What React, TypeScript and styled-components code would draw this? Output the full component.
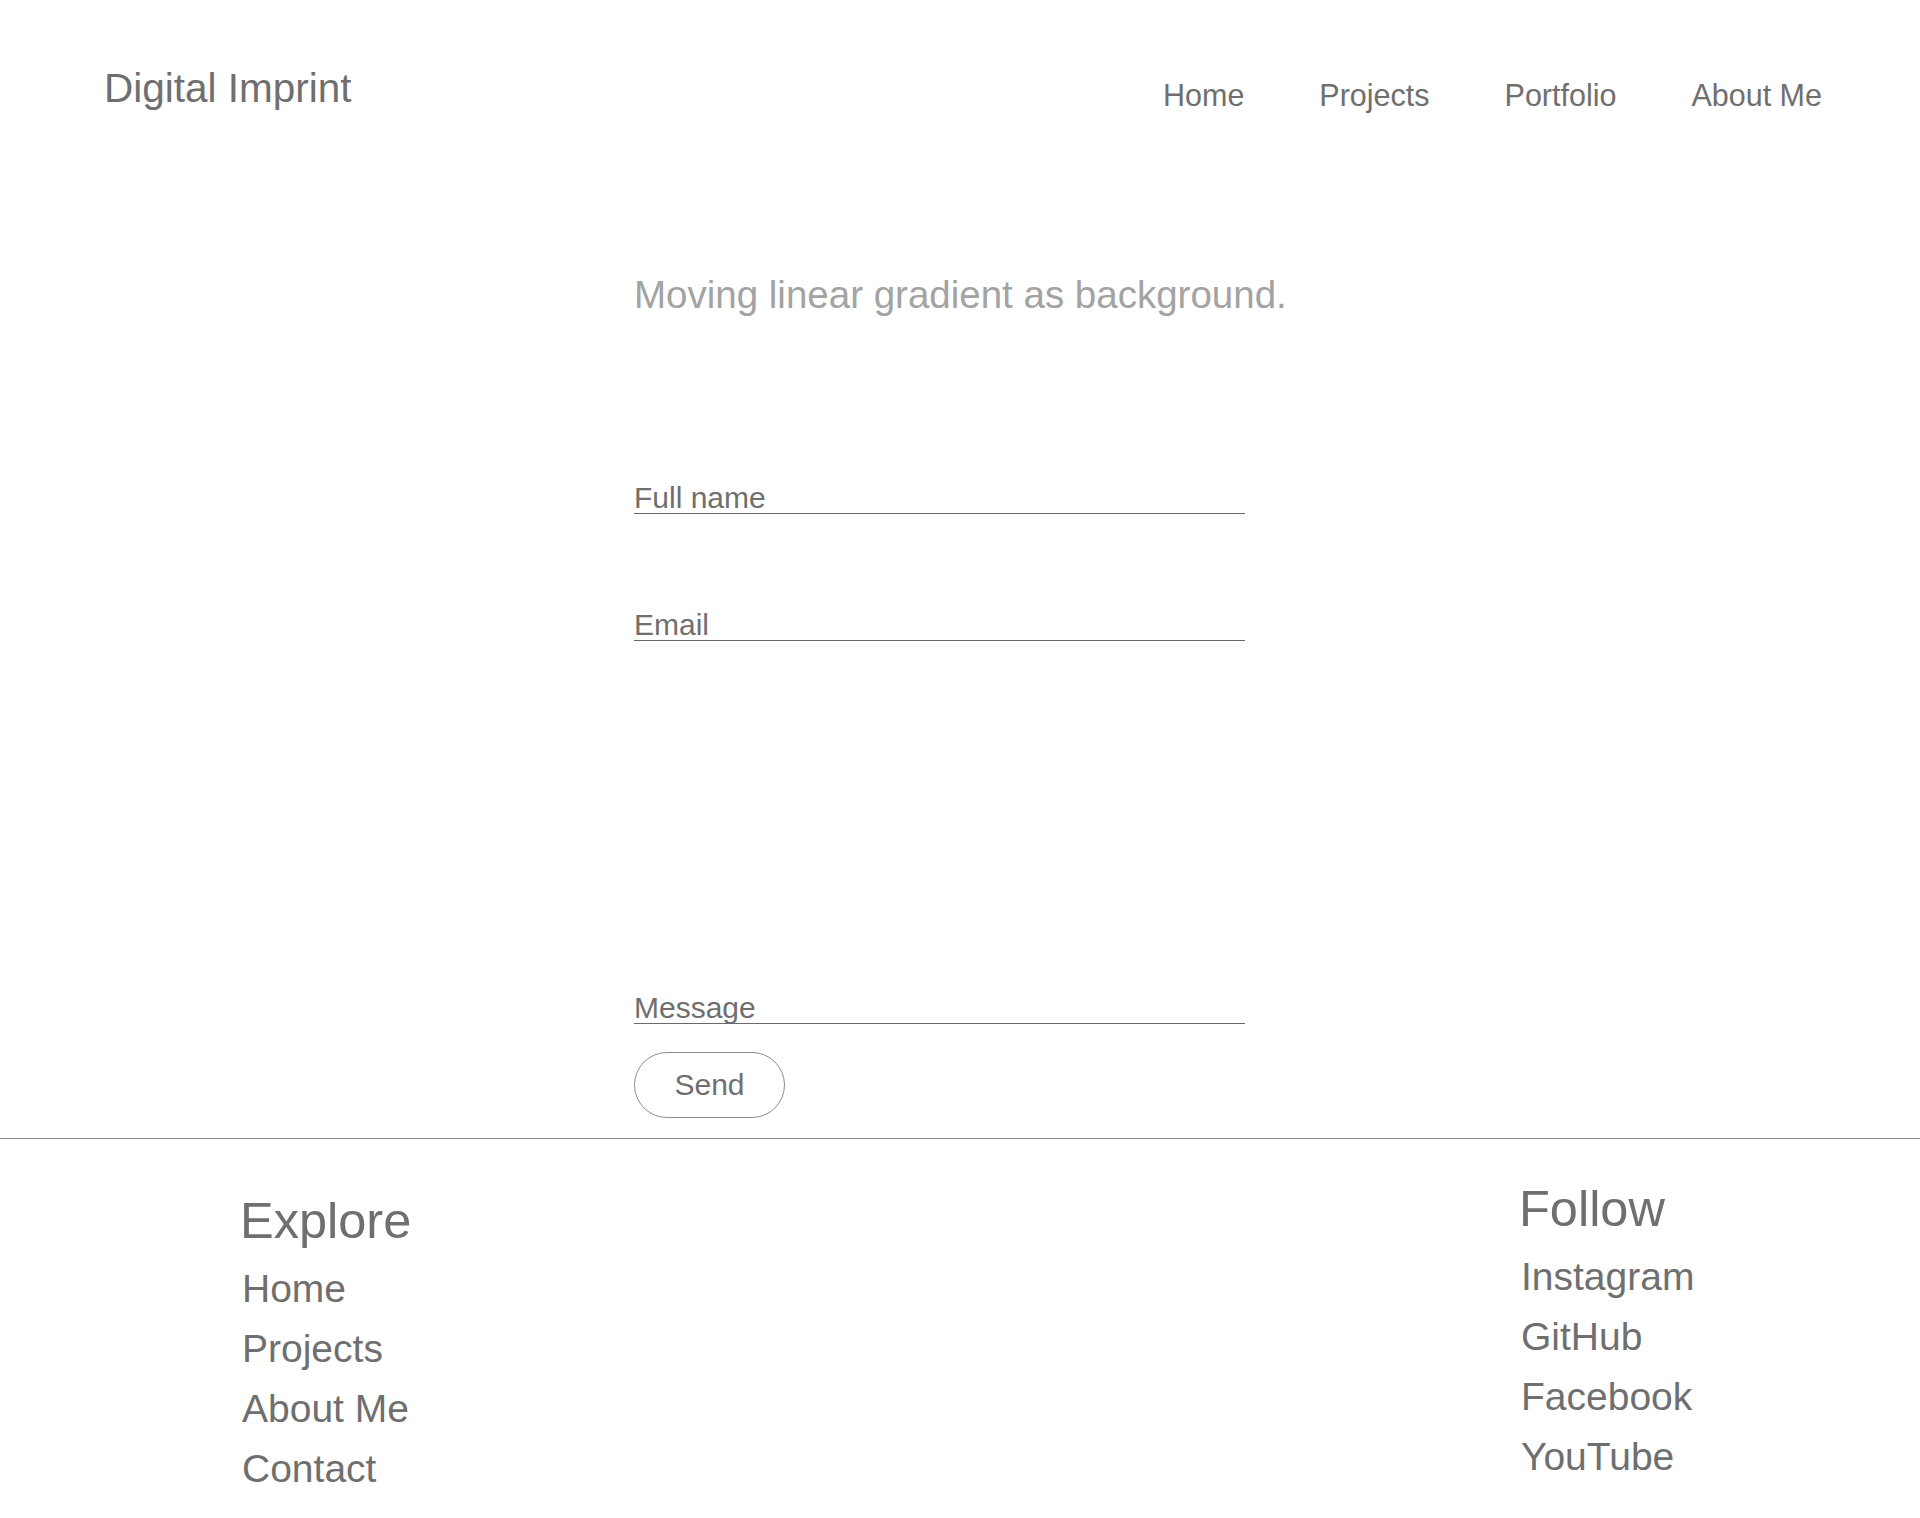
import React from "react";
import styled, { createGlobalStyle } from "styled-components";

const GlobalStyle = createGlobalStyle`
  body {
    margin: 0;
    background: #ffffff;
    font-family: "Liberation Sans", Arial, Helvetica, sans-serif;
    color: #6f6f6f;
  }
`;

const Page = styled.div`
  display: flex;
  flex-direction: column;
  min-height: 1518px;
`;

const Header = styled.header`
  display: flex;
  justify-content: space-between;
  align-items: flex-start;
  padding: 64px 98px 0 104px;
`;

const Logo = styled.a`
  font-size: 40.5px;
  line-height: 48px;
  color: #6f6f6f;
  text-decoration: none;
`;

const Nav = styled.nav`
  display: flex;
  gap: 75px;
  margin-top: 13px;
`;

const NavLink = styled.a`
  font-size: 30.5px;
  line-height: 36px;
  color: #6f6f6f;
  text-decoration: none;
`;

const Main = styled.main`
  width: 980px;
  margin: 0 auto;
  padding: 159px 0 20px 164px;
  box-sizing: border-box;
`;

const Heading = styled.h2`
  margin: 0;
  font-size: 38.5px;
  font-weight: 400;
  line-height: 46px;
  color: #a3a3a3;
`;

const Form = styled.form`
  display: flex;
  flex-direction: column;
  align-items: flex-start;
  width: 611px;
  margin-top: 165px;
`;

const Field = styled.label<{ $space?: number }>`
  display: block;
  align-self: stretch;
  margin-top: ${(p) => p.$space ?? 0}px;
  font-size: 30px;
  line-height: 30px;
  color: #6f6f6f;
  border-bottom: 1px solid #6a6a6a;
`;

const SendButton = styled.button`
  display: flex;
  align-items: center;
  justify-content: center;
  width: 151px;
  height: 66px;
  margin-top: 28px;
  padding: 0;
  border: 1px solid #8c8c8c;
  border-radius: 33px;
  background: transparent;
  font-family: inherit;
  font-size: 30px;
  color: #6f6f6f;
  cursor: pointer;
`;

const Footer = styled.footer`
  display: grid;
  grid-template-columns: 1279px 1fr;
  align-items: start;
  border-top: 1px solid #8a8a8a;
  padding: 0 0 18px 240px;
`;

const Column = styled.div<{ $top: number }>`
  display: flex;
  flex-direction: column;
  align-items: flex-start;
  padding-top: ${(p) => p.$top}px;
`;

const ColumnTitle = styled.h3`
  margin: 0 0 10px;
  font-size: 50.5px;
  font-weight: 400;
  line-height: 56px;
  color: #6f6f6f;
`;

const FooterLink = styled.a`
  padding-left: 2px;
  font-size: 39px;
  line-height: 60px;
  color: #6f6f6f;
  text-decoration: none;
`;

const navItems = ["Home", "Projects", "Portfolio", "About Me"];
const exploreItems = ["Home", "Projects", "About Me", "Contact"];
const followItems = ["Instagram", "GitHub", "Facebook", "YouTube"];

const App = () => {
  return (
    <Page>
      <GlobalStyle />
      <Header>
        <Logo href="#">Digital Imprint</Logo>
        <Nav>
          {navItems.map((item) => (
            <NavLink key={item} href="#">
              {item}
            </NavLink>
          ))}
        </Nav>
      </Header>

      <Main>
        <Heading>Moving linear gradient as background.</Heading>
        <Form onSubmit={(e) => e.preventDefault()}>
          <Field>Full name</Field>
          <Field $space={96}>Email</Field>
          <Field $space={352}>Message</Field>
          <SendButton type="submit">Send</SendButton>
        </Form>
      </Main>

      <Footer>
        <Column $top={54}>
          <ColumnTitle>Explore</ColumnTitle>
          {exploreItems.map((item) => (
            <FooterLink key={item} href="#">
              {item}
            </FooterLink>
          ))}
        </Column>
        <Column $top={42}>
          <ColumnTitle>Follow</ColumnTitle>
          {followItems.map((item) => (
            <FooterLink key={item} href="#">
              {item}
            </FooterLink>
          ))}
        </Column>
      </Footer>
    </Page>
  );
};

export default App;
